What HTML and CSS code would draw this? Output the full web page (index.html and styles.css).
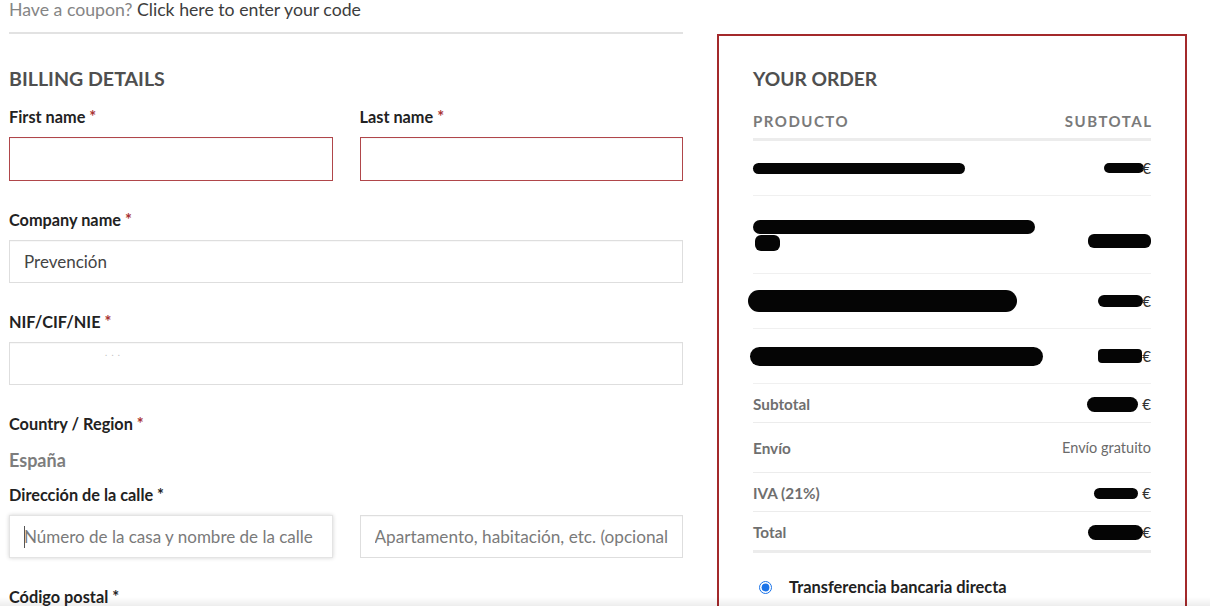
FILE: index.html
```html
<!DOCTYPE html>
<html lang="es">
<head>
<meta charset="utf-8">
<title>Checkout</title>
<link rel="stylesheet" href="styles.css">
</head>
<body>
<div class="page">
  <div class="left">
    <div class="coupon"><span class="muted">Have a coupon?</span> <a class="coupon-link" href="#">Click here to enter your code</a></div>
    <h3 class="section-title">BILLING DETAILS</h3>

    <div class="row-2 field">
      <div>
        <label class="lbl">First name <span class="req">*</span></label>
        <input class="inp inp-tall inp-error" type="text">
      </div>
      <div>
        <label class="lbl">Last name <span class="req">*</span></label>
        <input class="inp inp-tall inp-error" type="text">
      </div>
    </div>

    <div class="field">
      <label class="lbl">Company name <span class="req">*</span></label>
      <input class="inp" type="text" value="Prevención">
    </div>

    <div class="field">
      <label class="lbl">NIF/CIF/NIE <span class="req">*</span></label>
      <div class="inp inp-fake"><span class="dots">. . .</span></div>
    </div>

    <div class="field field-country">
      <label class="lbl">Country / Region <span class="req">*</span></label>
      <div class="country">España</div>
    </div>

    <div class="field">
      <label class="lbl">Dirección de la calle <span class="req-plain">*</span></label>
      <div class="row-2">
        <div class="focus-wrap">
          <input class="inp inp-focus" type="text" placeholder="Número de la casa y nombre de la calle">
          <span class="caret"></span>
        </div>
        <input class="inp inp-apt" type="text" placeholder="Apartamento, habitación, etc. (opcional)">
      </div>
    </div>

    <div class="field">
      <label class="lbl">Código postal <span class="req-plain">*</span></label>
    </div>
  </div>

  <div class="order">
    <h3 class="section-title order-title">YOUR ORDER</h3>
    <div class="otable">
      <div class="ohead">
        <span>PRODUCTO</span>
        <span>SUBTOTAL</span>
      </div>

      <div class="orow">
        <div class="pname"><span class="redact r1"></span></div>
        <div class="price"><span class="redact p1"></span>€</div>
      </div>
      <div class="orow orow-tall">
        <div class="pname pname-2">
          <span class="redact r2a"></span>
          <span class="redact r2b"></span>
        </div>
        <div class="price"><span class="redact p2"></span></div>
      </div>
      <div class="orow">
        <div class="pname"><span class="redact r3"></span></div>
        <div class="price"><span class="redact p3"></span>€</div>
      </div>
      <div class="orow">
        <div class="pname"><span class="redact r4"></span></div>
        <div class="price"><span class="redact p4"></span>€</div>
      </div>

      <div class="trow">
        <span class="tlabel">Subtotal</span>
        <span class="price"><span class="redact p5"></span>&nbsp;€</span>
      </div>
      <div class="trow trow-ship">
        <span class="tlabel">Envío</span>
        <span class="ship">Envío gratuito</span>
      </div>
      <div class="trow">
        <span class="tlabel">IVA (21%)</span>
        <span class="price"><span class="redact p6"></span>&nbsp;€</span>
      </div>
      <div class="trow trow-total">
        <span class="tlabel">Total</span>
        <span class="price"><span class="redact p7"></span>€</span>
      </div>
    </div>

    <div class="payment">
      <input class="radio" type="radio" name="pay" checked>
      <span class="pay-label">Transferencia bancaria directa</span>
    </div>
  </div>
</div>
<div class="bottom-shade"></div>
</body>
</html>
```

FILE: styles.css
```css
* { box-sizing: border-box; }

html, body {
  margin: 0;
  padding: 0;
  background: #fff;
  overflow: hidden;
}

body {
  font-family: Lato, "Open Sans", "Liberation Sans", sans-serif;
  color: #222;
}

.page {
  display: flex;
  align-items: flex-start;
  gap: 34px;
  padding-left: 9px;
}

.left {
  width: 674px;
  flex: none;
}

.coupon {
  font-size: 17.7px;
  line-height: 20px;
  padding-bottom: 12px;
  border-bottom: 2px solid #e2e2e2;
}

.muted { color: #858585; }

.coupon-link {
  color: #3d3d3d;
  text-decoration: none;
}

.section-title {
  margin: 33px 0 15px;
  font-size: 19.6px;
  line-height: 24px;
  font-weight: 700;
  color: #4f4f4f;
}

.row-2 {
  display: grid;
  grid-template-columns: 1fr 1fr;
  column-gap: 27px;
}

.field {
  margin-bottom: 28px;
}

.lbl {
  display: block;
  font-size: 16.3px;
  line-height: 22px;
  font-weight: 700;
  color: #222;
  margin-bottom: 9px;
}

.req { color: #a83232; }
.req-plain { color: #222; }

.inp {
  display: block;
  width: 100%;
  height: 43px;
  padding: 0 14px;
  border: 1px solid #dedede;
  border-radius: 0;
  background: #fff;
  font-family: Lato, "Open Sans", "Liberation Sans", sans-serif;
  font-size: 17px;
  color: #444;
  outline: none;
  box-shadow: inset 0 1px 1px rgba(0, 0, 0, 0.03);
}

.inp-tall { height: 44px; }

.inp::placeholder { color: #7a7a7a; }

.inp-error { border-color: #b0464a; }

.inp-apt { font-size: 17.2px; }

.focus-wrap {
  position: relative;
}

.inp-focus {
  box-shadow: 0 0 4px rgba(0, 0, 0, 0.18);
  border-color: #e4e4e4;
}

.caret {
  position: absolute;
  left: 15px;
  top: 11px;
  width: 1px;
  height: 22px;
  background: #555;
}

.inp-fake {
  position: relative;
}

.dots {
  display: block;
  padding-left: 81px;
  padding-top: 5px;
  font-size: 9px;
  line-height: 10px;
  color: #bdbdbd;
  letter-spacing: 1px;
}

.field-country { margin-bottom: 13px; }

.country {
  margin-top: 14px;
  font-size: 18px;
  line-height: 22px;
  font-weight: 700;
  color: #7d7d7d;
}

/* Order box */
.order {
  width: 470px;
  flex: none;
  margin-top: 34px;
  height: 600px;
  border: 2px solid #a3292b;
  border-bottom: none;
  padding: 0 34px;
}

.order-title {
  margin: 31px 0 19px;
  font-size: 19.2px;
}

.ohead {
  display: flex;
  justify-content: space-between;
  font-size: 15px;
  line-height: 22px;
  font-weight: 700;
  letter-spacing: 1.5px;
  color: #7a7a7a;
  padding-bottom: 6px;
  border-bottom: 3px solid #ececec;
}

.ohead span:last-child { margin-right: -1.5px; }

.orow {
  display: flex;
  justify-content: space-between;
  align-items: center;
  height: 55px;
  border-bottom: 1px solid #f0f0f0;
  font-size: 14px;
  line-height: 20px;
  color: #444;
}

.orow-tall { height: 78px; }

.pname {
  display: flex;
  flex-direction: column;
  justify-content: center;
  min-height: 20px;
}

.pname-2 { min-height: 40px; }

.price {
  display: flex;
  align-items: center;
  justify-content: flex-end;
  font-size: 15px;
  line-height: 20px;
  color: #333;
}

.redact {
  display: block;
  background: #050505;
  border-radius: 8px;
}

.r1 { width: 212px; height: 11px; }
.r2a { width: 282px; height: 14px; margin-top: 2px; }
.r2b { width: 25px; height: 16px; margin-top: 1px; margin-left: 2px; border-radius: 6px; }
.r3 { width: 269px; height: 22px; margin-left: -5px; border-radius: 12px; }
.r4 { width: 293px; height: 19px; margin-left: -3px; border-radius: 10px; }

.p1 { width: 40px; height: 10px; margin-right: -2px; }
.p2 { width: 63px; height: 14px; margin-top: 12px; border-radius: 6px; }
.p3 { width: 45px; height: 12px; margin-right: -1px; }
.p4 { width: 44px; height: 14px; border-radius: 4px; }
.p5 { width: 51px; height: 15px; }
.p6 { width: 44px; height: 11px; }
.p7 { width: 55px; height: 15px; margin-right: -1px; }

.trow {
  display: flex;
  justify-content: space-between;
  align-items: center;
  height: 39px;
  padding-top: 2px;
  border-bottom: 1px solid #ececec;
  font-size: 15.3px;
  line-height: 20px;
}

.trow-ship { height: 50px; padding-top: 1px; }

.trow-total { height: 41px; border-bottom: 3px solid #ececec; }

.tlabel {
  font-weight: 700;
  color: #6f6f6f;
}

.ship {
  color: #6a6a6a;
  font-size: 14.5px;
}

.payment {
  display: flex;
  align-items: center;
  margin-top: 22px;
  height: 24px;
}

.radio {
  margin: 0 17px 0 6px;
  width: 13px;
  height: 13px;
  accent-color: #1a73e8;
}

.pay-label {
  font-size: 16.4px;
  line-height: 24px;
  font-weight: 700;
  color: #222;
}

.bottom-shade {
  position: fixed;
  left: 0;
  right: 0;
  bottom: 0;
  height: 9px;
  background: linear-gradient(to bottom, rgba(0, 0, 0, 0), rgba(0, 0, 0, 0.07));
  pointer-events: none;
}
```
